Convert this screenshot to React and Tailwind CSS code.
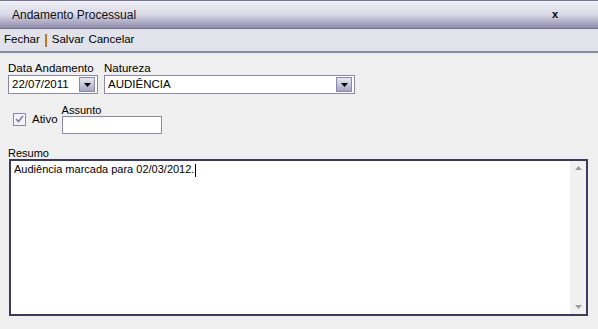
import React from 'react';

// Windows-style "Andamento Processual" form
const DropButton = () => (
  <div className="flex items-center justify-center w-[16px] h-[15px] border border-[#8c89a6] bg-gradient-to-b from-[#e8e7f0] to-[#a9a6c2]">
    <svg width="7" height="4" viewBox="0 0 7 4">
      <path d="M0 0h7L3.5 4z" fill="#000" />
    </svg>
  </div>
);

const App = () => {
  return (
    <div className="w-[598px] h-[329px] bg-[#efefef] flex flex-col text-[11px] text-black" style={{ fontFamily: '"Liberation Sans", Arial, sans-serif' }}>
      {/* Title bar */}
      <div className="h-[29px] shrink-0 flex items-center justify-between border-t border-b border-[#77748f] bg-gradient-to-b from-[#f0f0f7] via-[#d9d8e6] to-[#8f8bab] pl-[12px] pr-[40px]">
        <span className="text-[12px] text-[#111]">Andamento Processual</span>
        <span className="font-bold text-[11px] leading-none">x</span>
      </div>

      {/* Toolbar */}
      <div className="h-[24px] shrink-0 flex items-center bg-[#e2e2eb] border-b-2 border-[#8a87a3] pl-[4px] gap-[4px] text-[11.5px]">
        <span>Fechar</span>
        <span className="w-[2px] h-[13px] bg-[#c17a22] mx-[1px]"></span>
        <span>Salvar</span>
        <span>Cancelar</span>
      </div>

      {/* Body */}
      <div className="flex flex-col px-[8px] pt-[8px]">
        <div className="flex gap-[6px]">
          <div className="flex flex-col">
            <span className="leading-[14px] text-[11.5px]">Data Andamento</span>
            <div className="w-[90px] h-[19px] border border-[#8c89a6] bg-white flex items-center justify-between pl-[3px] pr-[2px]">
              <span className="text-[11.5px]">22/07/2011</span>
              <DropButton />
            </div>
          </div>
          <div className="flex flex-col">
            <span className="leading-[14px] text-[11.5px]">Natureza</span>
            <div className="w-[251px] h-[19px] border border-[#8c89a6] bg-white flex items-center justify-between pl-[3px] pr-[2px]">
              <span className="text-[11.5px]">AUDIÊNCIA</span>
              <DropButton />
            </div>
          </div>
        </div>

        <div className="flex items-end mt-[10px]">
          <div className="flex items-center ml-[5px] mb-[6px]">
            <div className="w-[13px] h-[13px] border border-[#8c89a6] bg-[#f4f4f8] flex items-center justify-center">
              <svg width="9" height="8" viewBox="0 0 9 8">
                <path d="M1 4l2.5 2.5L8 1" stroke="#7f7d99" strokeWidth="1.6" fill="none" />
              </svg>
            </div>
            <span className="ml-[6px] text-[11.5px]">Ativo</span>
          </div>
          <div className="flex flex-col ml-[4px]">
            <span className="leading-[12px]">Assunto</span>
            <div className="w-[100px] h-[18px] border border-[#8c89a6] bg-white"></div>
          </div>
        </div>

        <span className="leading-[12px] mt-[13px]">Resumo</span>
        <div className="ml-[1px] w-[579px] h-[157px] border-2 border-[#3d3a5a] bg-white flex">
          <div className="flex-1 pl-[3px]">
            <span>Audiência marcada para 02/03/2012.</span>
            <span className="inline-block w-[1px] h-[13px] bg-black align-middle ml-[1px]"></span>
          </div>
          <div className="w-[16px] bg-[#f0f0f0] flex flex-col justify-between items-center py-[5px]">
            <svg width="7" height="4" viewBox="0 0 7 4"><path d="M0 4h7L3.5 0z" fill="#9a9a9a" /></svg>
            <svg width="7" height="4" viewBox="0 0 7 4"><path d="M0 0h7L3.5 4z" fill="#9a9a9a" /></svg>
          </div>
        </div>
      </div>
    </div>
  );
};

export default App;
